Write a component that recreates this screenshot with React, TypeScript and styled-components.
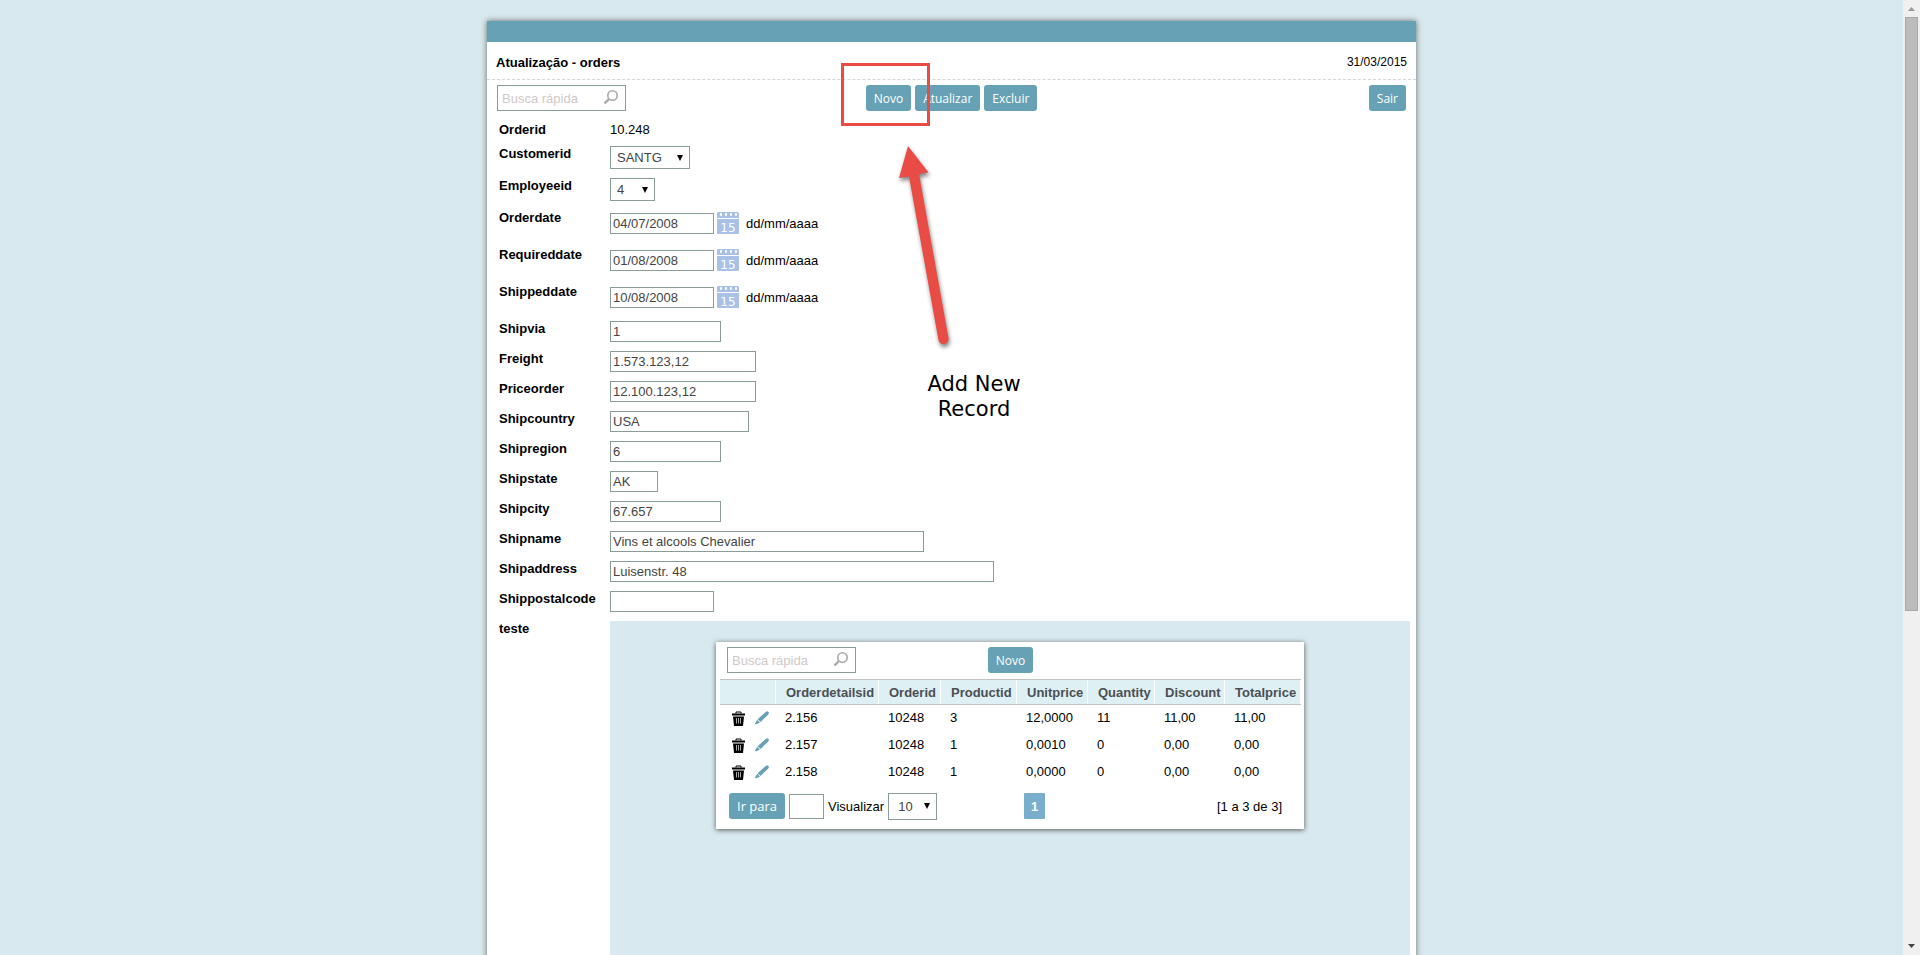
import React from "react";
import styled, { createGlobalStyle, css } from "styled-components";

const Global = createGlobalStyle`
  * { box-sizing: border-box; }
  body { margin: 0; background: #d8e9ef; overflow: hidden; }
  body, button, input, select { font-family: "Liberation Sans", Arial, sans-serif; font-size: 13px; }
`;

const Page = styled.div`
  display: flex;
  height: 100vh;
  color: #000;
  line-height: 15px;
`;

const Content = styled.main`
  flex: 1;
  min-width: 0;
  overflow: hidden;
  padding-top: 21px;
`;

const Panel = styled.section`
  position: relative;
  width: 100%;
  max-width: 929px;
  margin: 0 auto;
  background: #fff;
  box-shadow: 0 0 6px #666;
`;

const TopBar = styled.div`
  height: 21px;
  background: #66a1b6;
`;

const Header = styled.header`
  display: flex;
  justify-content: space-between;
  align-items: center;
  height: 38px;
  padding: 4px 9px 0;
  border-bottom: 1px dashed #d6d6d6;
`;

const Title = styled.h1`
  margin: 0;
  font-size: 13px;
`;

const DateText = styled.time`
  font-size: 12px;
`;

const Toolbar = styled.div`
  display: grid;
  grid-template-columns: 1fr auto 1fr;
  align-items: center;
  padding: 5px 10px 7px;
`;

const Actions = styled.div<{ $end?: boolean }>`
  display: flex;
  justify-content: ${(p) => (p.$end ? "flex-end" : "center")};
  gap: 4px;
`;

const Button = styled.button`
  height: 26px;
  padding: 0 8px;
  border: 0;
  border-radius: 3px;
  background: #66a1b6;
  color: #fff;
  font-family: "Open Sans", sans-serif;
  font-size: 12px;
  font-weight: 500;
`;

const GoButton = styled(Button)`
  font-size: 13px;
`;

const SearchBox = styled.label`
  display: flex;
  align-items: center;
  width: 129px;
  height: 26px;
  padding: 0 6px 0 4px;
  border: 1px solid #8a9c96;
  background: #fff;
`;

const SearchInput = styled.input`
  flex: 1;
  min-width: 0;
  padding: 0;
  border: 0;
  outline: 0;
  background: none;
  &::placeholder { color: #d0c8c8; opacity: 1; }
`;

const boxed = css`
  border: 1px solid #8a9c96;
  border-radius: 0;
  background: #fff;
  color: #444;
  outline: 0;
`;

const Field = styled.input<{ $w: number; $h?: number }>`
  ${boxed}
  width: ${(p) => p.$w}px;
  height: ${(p) => p.$h ?? 21}px;
  padding: 0 2px;
`;

const SelectWrap = styled.span<{ $w: number; $h?: number }>`
  position: relative;
  display: block;
  width: ${(p) => p.$w}px;
  height: ${(p) => p.$h ?? 23}px;
  & > svg { position: absolute; right: 6px; top: 50%; margin-top: -4px; pointer-events: none; }
`;

const Select = styled.select<{ $pad?: number }>`
  ${boxed}
  appearance: none;
  display: block;
  width: 100%;
  height: 100%;
  padding: 0 ${(p) => p.$pad ?? 6}px;
`;

const Row = styled.div`
  display: grid;
  grid-template-columns: 111px minmax(0, 1fr);
  padding: 4px 6px 5px 12px;
`;

const Label = styled.label`
  font-weight: bold;
`;

const DateCell = styled.div`
  display: flex;
  align-items: center;
  height: 28px;
  padding-bottom: 2px;
`;

const CalendarButton = styled.button`
  display: flex;
  margin: 0 7px 0 3px;
  padding: 0;
  border: 0;
  background: none;
`;

const SubArea = styled.div`
  height: 800px;
  padding-top: 21px;
  background: #d8e9ef;
`;

const SubPanel = styled.section`
  width: 588px;
  max-width: 100%;
  margin: 0 auto;
  padding: 5px 3px 9px 4px;
  background: #fff;
  box-shadow: 0 1px 5px #555;
`;

const SubToolbar = styled(Toolbar)`
  padding: 0 7px 6px;
`;

const Table = styled.table`
  width: 100%;
  table-layout: fixed;
  border-collapse: collapse;
`;

const Th = styled.th<{ $w: number }>`
  width: ${(p) => p.$w}px;
  height: 25px;
  padding: 0 0 0 10px;
  border-top: 1px solid #c3c3c3;
  border-bottom: 1px solid #c3c3c3;
  background: #dff0f5;
  box-shadow: inset -1px 0 #fff;
  color: #4b4f52;
  text-align: left;
  white-space: nowrap;
`;

const Td = styled.td`
  height: 27px;
  padding: 0 0 2px 9px;
`;

const IconCell = styled.div`
  display: flex;
  gap: 10px;
  padding: 3px 0 0 3px;
`;

const IconButton = styled.button`
  display: flex;
  padding: 0;
  border: 0;
  background: none;
`;

const Footer = styled.div`
  display: grid;
  grid-template-columns: 1fr auto 1fr;
  align-items: center;
  padding: 7px 19px 0 9px;
`;

const Pager = styled.div`
  display: flex;
  align-items: center;
  gap: 4px;
`;

const PageNumber = styled.button`
  width: 21px;
  height: 26px;
  margin-left: 58px;
  padding: 0;
  border: 0;
  border-radius: 1px;
  background: #7aaecd;
  color: #fff;
  font-weight: bold;
`;

const Range = styled.span`
  text-align: right;
`;

const Callout = styled.div`
  position: absolute;
  top: 42px;
  left: 354px;
  width: 89px;
  height: 63px;
  border: 3px solid #e94b45;
  pointer-events: none;
`;

const Arrow = styled.svg`
  position: absolute;
  top: 119px;
  left: 403px;
  pointer-events: none;
  overflow: visible;
  filter: drop-shadow(1px 3px 2px rgba(0, 0, 0, 0.5));
`;

const Note = styled.p`
  position: absolute;
  top: 351px;
  left: 427px;
  width: 120px;
  margin: 0;
  font-family: "DejaVu Sans", Verdana, sans-serif;
  font-size: 21px;
  line-height: 25px;
  text-align: center;
`;

const Scrollbar = styled.div`
  display: flex;
  flex-direction: column;
  align-items: center;
  justify-content: space-between;
  width: 17px;
  padding: 7px 0;
  background: #f0f0f0;
`;

const Track = styled.div`
  flex: 1;
  width: 13px;
  margin: 6px 0 13px;
`;

const Thumb = styled.div`
  height: 65%;
  border: 1px solid #a8a8a8;
  background: #bcbcbc;
`;

const Caret = () => (
  <svg width="8" height="8" viewBox="0 0 8 8"><path d="M1 1h6L4 7z" fill="#000" /></svg>
);

const Magnifier = () => (
  <svg width="16" height="18" viewBox="0 0 16 18" fill="none" stroke="#aaa">
    <circle cx="9.5" cy="6.5" r="4.7" strokeWidth="1.6" />
    <path d="M6 10L1.500 14.500" strokeWidth="2.4" />
  </svg>
);

const Calendar = () => (
  <svg width="22" height="22" viewBox="0 0 22 22">
    <path d="M1 0h20l1 1v5H0V1zM0 7h22v14q0 1-1 1H1q-1 0-1-1z" fill="#a9c1e6" />
    <g fill="#fff">
      <rect x="3" y="1" width="2" height="3" rx="1" /><rect x="8" y="1" width="2" height="3" rx="1" />
      <rect x="13" y="1" width="2" height="3" rx="1" /><rect x="18" y="1" width="2" height="3" rx="1" />
    </g>
    <text x="11" y="20" textAnchor="middle" fill="#fff" fontFamily="DejaVu Sans" fontSize="12">15</text>
  </svg>
);

const Trash = () => (
  <svg width="13" height="16" viewBox="0 0 13 16">
    <path d="M4 2.500V1h5v1.500" fill="none" stroke="#000" />
    <path d="M0 2.500h13v2H0zM1 5.500h11L11 15H2z" />
    <path d="M4.500 7v5.500M6.500 7v5.500M8.500 7v5.500" stroke="#aaa" />
  </svg>
);

const Pencil = () => (
  <svg width="14" height="14" viewBox="0 0 14 14" fill="#66a1b6">
    <path d="M11 .8q1-1 2.200 0t.3 2.400L5.600 11 2.600 8.200zM2.200 8.800L5 11.400l-2 1L.8 13.400 0 12.600l1.200-2z" />
  </svg>
);

const Search = ({ id }: { id: string }) => (
  <SearchBox htmlFor={id}>
    <SearchInput id={id} placeholder="Busca rápida" aria-label="Busca rápida" />
    <Magnifier />
  </SearchBox>
);

const selects = [
  { name: "Customerid", value: "SANTG", w: 80 },
  { name: "Employeeid", value: "4", w: 45 },
];
const dates = [
  { name: "Orderdate", value: "04/07/2008" },
  { name: "Requireddate", value: "01/08/2008" },
  { name: "Shippeddate", value: "10/08/2008" },
];
const fields = [
  { name: "Shipvia", value: "1", w: 111 },
  { name: "Freight", value: "1.573.123,12", w: 146 },
  { name: "Priceorder", value: "12.100.123,12", w: 146 },
  { name: "Shipcountry", value: "USA", w: 139 },
  { name: "Shipregion", value: "6", w: 111 },
  { name: "Shipstate", value: "AK", w: 48 },
  { name: "Shipcity", value: "67.657", w: 111 },
  { name: "Shipname", value: "Vins et alcools Chevalier", w: 314 },
  { name: "Shipaddress", value: "Luisenstr. 48", w: 384 },
  { name: "Shippostalcode", value: "", w: 104 },
];
const columns: [string, number][] = [
  ["", 56], ["Orderdetailsid", 103], ["Orderid", 62], ["Productid", 76],
  ["Unitprice", 71], ["Quantity", 67], ["Discount", 70], ["Totalprice", 76],
];
const records = [
  ["2.156", "10248", "3", "12,0000", "11", "11,00", "11,00"],
  ["2.157", "10248", "1", "0,0010", "0", "0,00", "0,00"],
  ["2.158", "10248", "1", "0,0000", "0", "0,00", "0,00"],
];

export default function App() {
  return (
    <Page>
      <Global />
      <Content>
        <Panel>
          <TopBar />
          <Header>
            <Title>Atualização - orders</Title>
            <DateText>31/03/2015</DateText>
          </Header>
          <Toolbar>
            <Search id="search" />
            <Actions>
              <Button>Novo</Button>
              <Button>Atualizar</Button>
              <Button>Excluir</Button>
            </Actions>
            <Actions $end><Button>Sair</Button></Actions>
          </Toolbar>
          <Row>
            <Label as="span">Orderid</Label>
            <span>10.248</span>
          </Row>
          {selects.map((s) => (
            <Row key={s.name}>
              <Label htmlFor={s.name}>{s.name}</Label>
              <SelectWrap $w={s.w}>
                <Select id={s.name}><option>{s.value}</option></Select>
                <Caret />
              </SelectWrap>
            </Row>
          ))}
          {dates.map((d) => (
            <Row key={d.name}>
              <Label htmlFor={d.name}>{d.name}</Label>
              <DateCell>
                <Field id={d.name} defaultValue={d.value} $w={104} />
                <CalendarButton aria-label={"Calendário " + d.name}><Calendar /></CalendarButton>
                <span>dd/mm/aaaa</span>
              </DateCell>
            </Row>
          ))}
          {fields.map((f) => (
            <Row key={f.name}>
              <Label htmlFor={f.name}>{f.name}</Label>
              <Field id={f.name} defaultValue={f.value} $w={f.w} />
            </Row>
          ))}
          <Row>
            <Label as="span">teste</Label>
            <SubArea>
              <SubPanel>
                <SubToolbar>
                  <Search id="detail-search" />
                  <Actions><Button>Novo</Button></Actions>
                </SubToolbar>
                <Table>
                  <thead>
                    <tr>{columns.map(([c, w]) => <Th key={c} $w={w}>{c}</Th>)}</tr>
                  </thead>
                  <tbody>
                    {records.map((r) => (
                      <tr key={r[0]}>
                        <Td>
                          <IconCell>
                            <IconButton aria-label="Excluir"><Trash /></IconButton>
                            <IconButton aria-label="Editar"><Pencil /></IconButton>
                          </IconCell>
                        </Td>
                        {r.map((v, i) => <Td key={i}>{v}</Td>)}
                      </tr>
                    ))}
                  </tbody>
                </Table>
                <Footer>
                  <Pager>
                    <GoButton>Ir para</GoButton>
                    <Field $w={35} $h={25} aria-label="Ir para" />
                    <label htmlFor="page-size">Visualizar</label>
                    <SelectWrap $w={49} $h={27}>
                      <Select id="page-size" $pad={9}><option>10</option></Select>
                      <Caret />
                    </SelectWrap>
                  </Pager>
                  <PageNumber>1</PageNumber>
                  <Range>[1 a 3 de 3]</Range>
                </Footer>
              </SubPanel>
            </SubArea>
          </Row>
          <Callout />
          <Arrow width="60" height="210" viewBox="0 0 60 210">
            <path
              d="M18 6L38.500 32.500 29 34 58.500 198a5 5 0 0 1-10 2L19 36.500 9 38z"
              fill="#e94b45"
            />
          </Arrow>
          <Note>Add New Record</Note>
        </Panel>
      </Content>
      <Scrollbar aria-hidden="true">
        <svg width="7" height="4" viewBox="0 0 7 4"><path d="M0 4L3.500 0 7 4z" fill="#999" /></svg>
        <Track><Thumb /></Track>
        <svg width="7" height="4" viewBox="0 0 7 4"><path d="M0 0L3.500 4 7 0z" fill="#444" /></svg>
      </Scrollbar>
    </Page>
  );
}
